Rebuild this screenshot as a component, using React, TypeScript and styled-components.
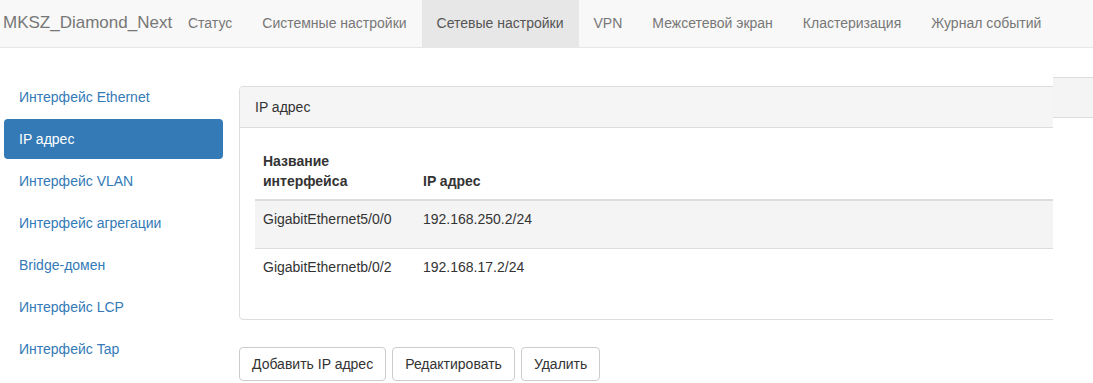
import React from "react";
import styled, { createGlobalStyle } from "styled-components";

const GlobalStyle = createGlobalStyle`
  html, body {
    margin: 0;
    padding: 0;
    background: #fff;
  }
  body {
    font-family: "Liberation Sans", Arial, sans-serif;
    font-size: 14px;
    line-height: 1.42857;
    color: #333;
  }
  * {
    box-sizing: border-box;
  }
`;

const Navbar = styled.div`
  display: flex;
  align-items: stretch;
  height: 48px;
  background-color: #f8f8f8;
  border-bottom: 1px solid #e7e7e7;
  white-space: nowrap;
`;

const Brand = styled.div`
  padding: 13px 0 0 3px;
  width: 173px;
  font-size: 17px;
  line-height: 20px;
  color: #777;
`;

const NavLink = styled.div<{ active?: boolean }>`
  padding: 13px 15px 0;
  line-height: 20px;
  color: ${(props) => (props.active ? "#555" : "#777")};
  background-color: ${(props) => (props.active ? "#e7e7e7" : "transparent")};
`;

const Content = styled.div`
  display: flex;
  align-items: flex-start;
  padding-left: 4px;
`;

const Sidebar = styled.ul`
  list-style: none;
  margin: 29px 0 0;
  padding: 0;
  width: 219px;
  flex: none;
`;

const Pill = styled.li<{ active?: boolean }>`
  margin-bottom: 2px;
  padding: 10px 15px;
  line-height: 20px;
  border-radius: 4px;
  color: ${(props) => (props.active ? "#fff" : "#337ab7")};
  background-color: ${(props) => (props.active ? "#337ab7" : "transparent")};
`;

const Main = styled.div`
  margin: 38px 0 0 16px;
  width: 814px;
  flex: none;
  overflow: hidden;
`;

const Panel = styled.div`
  width: 860px;
  border: 1px solid #ddd;
  border-radius: 4px;
  background: #fff;
`;

const PanelHeading = styled.div`
  padding: 10px 15px;
  line-height: 20px;
  background-color: #f5f5f5;
  border-bottom: 1px solid #ddd;
  border-radius: 3px 3px 0 0;
  color: #333;
`;

const PanelBody = styled.div`
  padding: 15px;
`;

const Table = styled.table`
  width: 100%;
  border-collapse: collapse;
  margin-bottom: 8px;
`;

const Th = styled.th<{ width?: string }>`
  width: ${(props) => props.width ?? "auto"};
  padding: 8px;
  text-align: left;
  vertical-align: bottom;
  font-weight: bold;
  line-height: 20px;
  border-bottom: 2px solid #ddd;
`;

const Tr = styled.tr<{ striped?: boolean }>`
  background-color: ${(props) => (props.striped ? "#f4f4f4" : "transparent")};
`;

const Td = styled.td`
  height: 48px;
  padding: 8px;
  vertical-align: top;
  line-height: 20px;
  border-top: 1px solid #ddd;
`;

const ButtonBar = styled.div`
  display: flex;
  gap: 6px;
  margin-top: 27px;
`;

const Button = styled.button`
  padding: 6px 12px;
  height: 34px;
  font-family: "Liberation Sans", Arial, sans-serif;
  font-size: 14px;
  line-height: 20px;
  color: #333;
  background-color: #fff;
  border: 1px solid #ccc;
  border-radius: 4px;
`;

const Peek = styled.div`
  flex: 1;
  margin-top: 29px;
  height: 41px;
  background-color: #f4f4f4;
  border-top: 1px solid #ddd;
  border-bottom: 1px solid #ddd;
`;

const navItems = [
  "Статус",
  "Системные настройки",
  "Сетевые настройки",
  "VPN",
  "Межсетевой экран",
  "Кластеризация",
  "Журнал событий",
];

const sideItems = [
  "Интерфейс Ethernet",
  "IP адрес",
  "Интерфейс VLAN",
  "Интерфейс агрегации",
  "Bridge-домен",
  "Интерфейс LCP",
  "Интерфейс Tap",
];

const rows = [
  { name: "GigabitEthernet5/0/0", ip: "192.168.250.2/24" },
  { name: "GigabitEthernetb/0/2", ip: "192.168.17.2/24" },
];

export default function App() {
  return (
    <>
      <GlobalStyle />
      <Navbar>
        <Brand>MKSZ_Diamond_Next</Brand>
        {navItems.map((item) => (
          <NavLink key={item} active={item === "Сетевые настройки"}>
            {item}
          </NavLink>
        ))}
      </Navbar>
      <Content>
        <Sidebar>
          {sideItems.map((item) => (
            <Pill key={item} active={item === "IP адрес"}>
              {item}
            </Pill>
          ))}
        </Sidebar>
        <Main>
          <Panel>
            <PanelHeading>IP адрес</PanelHeading>
            <PanelBody>
              <Table>
                <thead>
                  <tr>
                    <Th width="160px">
                      Название
                      <br />
                      интерфейса
                    </Th>
                    <Th>IP адрес</Th>
                  </tr>
                </thead>
                <tbody>
                  {rows.map((row, i) => (
                    <Tr key={row.name} striped={i % 2 === 0}>
                      <Td>{row.name}</Td>
                      <Td>{row.ip}</Td>
                    </Tr>
                  ))}
                </tbody>
              </Table>
            </PanelBody>
          </Panel>
          <ButtonBar>
            <Button>Добавить IP адрес</Button>
            <Button>Редактировать</Button>
            <Button>Удалить</Button>
          </ButtonBar>
        </Main>
        <Peek />
      </Content>
    </>
  );
}
